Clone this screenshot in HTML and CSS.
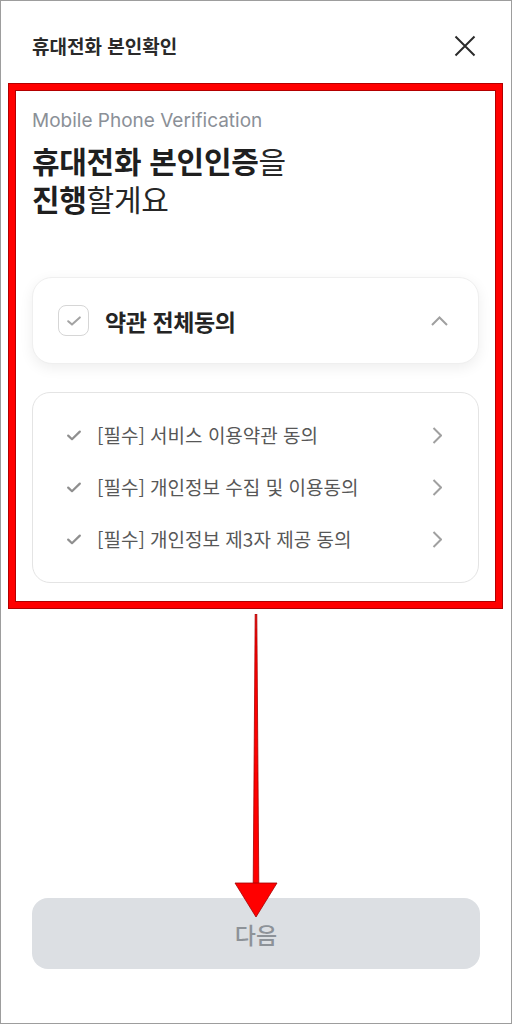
FILE: index.html
```html
<!DOCTYPE html>
<html lang="ko">
<head>
<meta charset="utf-8">
<title>휴대전화 본인확인</title>
<link rel="stylesheet" href="styles.css">
</head>
<body>
<div class="screen">
  <header class="header">
    <h1 class="header-title">휴대전화 본인확인</h1>
    <button class="close" aria-label="닫기">
      <svg width="22" height="22" viewBox="0 0 22 22"><path d="M1.5 1.5L20.5 20.5M20.5 1.5L1.5 20.5" stroke="#2b2b2b" stroke-width="2" fill="none"/></svg>
    </button>
  </header>

  <section class="highlight">
    <p class="subtitle">Mobile Phone Verification</p>
    <h2 class="heading"><b>휴대전화 본인인증</b>을<br><b>진행</b>할게요</h2>

    <div class="all-card">
      <span class="checkbox">
        <svg width="14" height="10" viewBox="0 0 14 10"><path d="M1.2 5.2L5 8.6L12.8 1.4" stroke="#a3a3a3" stroke-width="2" fill="none" stroke-linecap="round" stroke-linejoin="round"/></svg>
      </span>
      <span class="all-title">약관 전체동의</span>
      <svg class="chev-up" width="17" height="10" viewBox="0 0 17 10"><path d="M1 9L8.5 1.5L16 9" stroke="#a0a0a0" stroke-width="2" fill="none"/></svg>
    </div>

    <ul class="terms">
      <li class="term">
        <svg class="tick" width="14" height="11" viewBox="0 0 14 11"><path d="M1.2 5.6L5 9.2L12.8 1.6" stroke="#8f8f8f" stroke-width="2.2" fill="none" stroke-linecap="round" stroke-linejoin="round"/></svg>
        <span class="term-text">[필수] 서비스 이용약관 동의</span>
        <svg class="chev-right" width="10" height="17" viewBox="0 0 10 17"><path d="M1.5 1L9 8.5L1.5 16" stroke="#a0a0a0" stroke-width="2" fill="none"/></svg>
      </li>
      <li class="term">
        <svg class="tick" width="14" height="11" viewBox="0 0 14 11"><path d="M1.2 5.6L5 9.2L12.8 1.6" stroke="#8f8f8f" stroke-width="2.2" fill="none" stroke-linecap="round" stroke-linejoin="round"/></svg>
        <span class="term-text">[필수] 개인정보 수집 및 이용동의</span>
        <svg class="chev-right" width="10" height="17" viewBox="0 0 10 17"><path d="M1.5 1L9 8.5L1.5 16" stroke="#a0a0a0" stroke-width="2" fill="none"/></svg>
      </li>
      <li class="term">
        <svg class="tick" width="14" height="11" viewBox="0 0 14 11"><path d="M1.2 5.6L5 9.2L12.8 1.6" stroke="#8f8f8f" stroke-width="2.2" fill="none" stroke-linecap="round" stroke-linejoin="round"/></svg>
        <span class="term-text">[필수] 개인정보 제3자 제공 동의</span>
        <svg class="chev-right" width="10" height="17" viewBox="0 0 10 17"><path d="M1.5 1L9 8.5L1.5 16" stroke="#a0a0a0" stroke-width="2" fill="none"/></svg>
      </li>
    </ul>
  </section>

  <button class="next">다음</button>

  <svg class="arrow" width="60" height="310" viewBox="0 0 60 310">
    <path d="M29.2 0L30.8 0L32.8 271L27.2 271Z" fill="#ff0000" stroke="#a30000" stroke-width="0.8"/>
    <path d="M9 269L51 269L30 303Z" fill="#ff0000" stroke="#a30000" stroke-width="0.8"/>
  </svg>
</div>
</body>
</html>
```

FILE: styles.css
```css
* { box-sizing: border-box; }

html, body {
  margin: 0;
  padding: 0;
  background: #ffffff;
}

.screen {
  position: relative;
  width: 512px;
  height: 1024px;
  border: 1px solid #9d9d9d;
  background: #ffffff;
  display: flex;
  flex-direction: column;
  font-family: "Inter", "Noto Sans CJK KR", sans-serif;
  color: #222222;
  overflow: hidden;
}

.header {
  height: 83px;
  flex: none;
  display: flex;
  align-items: center;
  justify-content: space-between;
  padding: 6px 35px 0 31px;
}

.header-title {
  margin: 0;
  font-family: "Noto Sans CJK KR", sans-serif;
  font-size: 19px;
  font-weight: 700;
  color: #2a2a2a;
  line-height: 24px;
  letter-spacing: 0;
}

.close {
  border: 0;
  background: none;
  padding: 0;
  width: 22px;
  height: 22px;
  display: flex;
}

.highlight {
  flex: none;
  margin: 0 9px 0 8px;
  border: 6px solid #ff0000;
  box-shadow: 0 0 0 1px #b30000, inset 0 0 0 1px #b30000;
  padding: 19px 17px 19px 17px;
}

.subtitle {
  margin: 0;
  font-family: "Inter", "Noto Sans CJK KR", sans-serif;
  font-size: 19px;
  line-height: 24px;
  color: #8b9097;
  letter-spacing: 0;
}

.heading {
  margin: 8px 0 0;
  font-family: "Noto Sans CJK KR", sans-serif;
  font-size: 30px;
  line-height: 38px;
  font-weight: 400;
  color: #262626;
  letter-spacing: -0.3px;
}

.heading b { font-weight: 700; color: #1f1f1f; }

.all-card {
  margin-top: 60px;
  height: 87px;
  border-radius: 20px;
  border: 1px solid #efefef;
  background: #ffffff;
  box-shadow: 0 4px 14px rgba(0, 0, 0, 0.07);
  display: flex;
  align-items: center;
  padding: 0 30px 0 25px;
}

.checkbox {
  width: 31px;
  height: 31px;
  flex: none;
  border: 1.5px solid #d6d6d6;
  border-radius: 8px;
  display: flex;
  align-items: center;
  justify-content: center;
}

.all-title {
  margin-left: 16px;
  flex: 1;
  font-family: "Noto Sans CJK KR", sans-serif;
  font-size: 23px;
  font-weight: 700;
  line-height: 28px;
  color: #242424;
  letter-spacing: -0.4px;
}

.chev-up { flex: none; }

.terms {
  list-style: none;
  margin: 28px 0 0;
  padding: 16px 36px 17px 34px;
  border: 1px solid #e4e4e4;
  border-radius: 18px;
}

.term {
  height: 52px;
  display: flex;
  align-items: center;
}

.tick { flex: none; }

.term-text {
  flex: 1;
  margin-left: 16px;
  font-family: "Noto Sans CJK KR", sans-serif;
  font-size: 19px;
  line-height: 24px;
  color: #575757;
  letter-spacing: 0;
}

.chev-right { flex: none; }

.next {
  flex: none;
  margin: auto 31px 54px 31px;
  height: 71px;
  border: 0;
  border-radius: 16px;
  background: #dcdfe3;
  font-family: "Noto Sans CJK KR", sans-serif;
  font-size: 23px;
  font-weight: 500;
  color: #8d9298;
  padding: 0;
}

.arrow {
  position: absolute;
  left: 225px;
  top: 613px;
}
```
